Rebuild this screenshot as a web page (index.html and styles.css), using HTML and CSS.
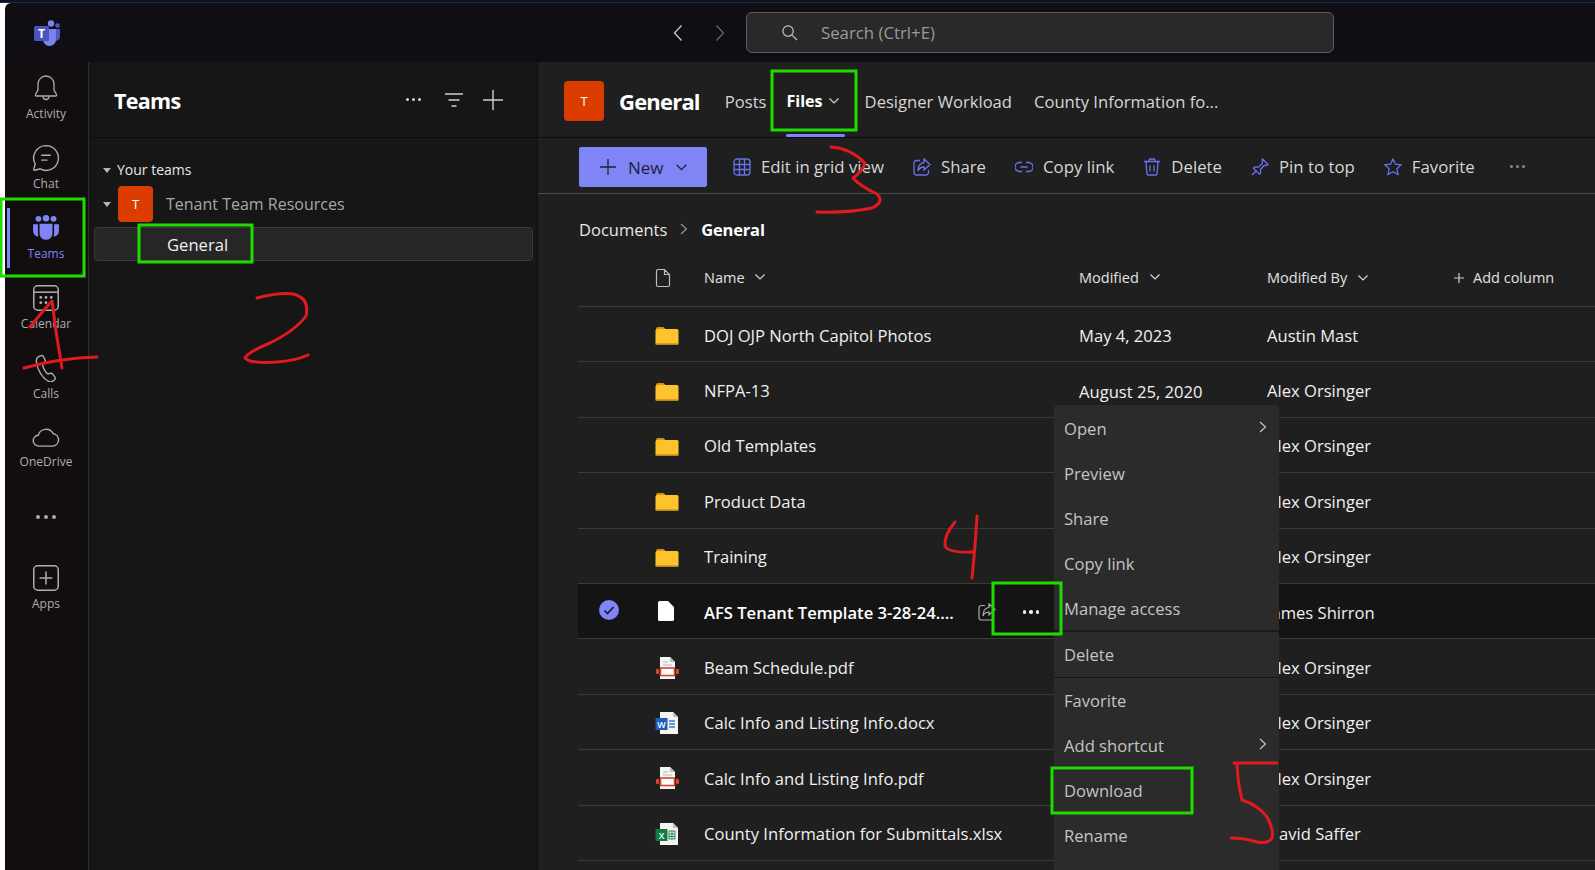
FILE: index.html
```html
<!DOCTYPE html>
<html lang="en">
<head>
    <meta charset="UTF-8">
    <title>General - Files</title>
    <link rel="stylesheet" href="styles.css">
</head>
<body>
    <svg class="defs" width="0" height="0">
        <symbol id="folder" viewBox="0 0 24 20">
            <path d="M1 4a2 2 0 0 1 2-2h5.500l2.500 2.500H1z" fill="#d9930d"/>
            <rect x="0.500" y="4" width="23" height="15.500" rx="1.500" fill="#fcc32d"/>
            <rect x="0.500" y="18" width="23" height="1.500" fill="#d9a017"/>
        </symbol>
        <symbol id="pdf" viewBox="0 0 24 24">
            <path d="M5 1h10l5 5v17H5z" fill="#f4f4f4"/>
            <path d="M15 1l5 5h-5z" fill="#bdbdbd"/>
            <path d="M8 6h5M8 9h9" stroke="#bbb" fill="none"/>
            <rect x="1" y="13" width="3" height="5" rx="1" fill="#d8482b"/>
            <rect x="21" y="13" width="3" height="5" rx="1" fill="#d8482b"/>
            <rect x="5.500" y="12" width="14" height="7.500" fill="#fff" stroke="#d8482b" stroke-width="1.600"/>
        </symbol>
        <symbol id="chevron" viewBox="0 0 12 8">
            <path d="M1.500 1.500L6 6l4.500-4.500" fill="none" stroke="currentColor" stroke-width="1.200"/>
        </symbol>
    </svg>

    <div class="top-strip"></div>
    <div class="app">
        <header class="titlebar">
            <svg class="logo" viewBox="0 0 27 26">
                <circle cx="17" cy="3.500" r="3.200" fill="#7b83eb"/>
                <circle cx="23.500" cy="5.500" r="2.300" fill="#5059c9"/>
                <path d="M19 9h7v8a4 4 0 0 1-7 2.500z" fill="#5059c9"/>
                <path d="M8 9h14v10a6.500 6.500 0 0 1-13 1z" fill="#7b83eb"/>
                <rect x="0" y="6" width="15" height="15" rx="1.500" fill="#4b53bc"/>
                <text class="logo-t" x="7.500" y="18">T</text>
            </svg>
            <div class="history">
                <svg class="hist-arrow" viewBox="0 0 10 18"><path d="M8.500 1.500L1.500 9l7 7.500"/></svg>
                <svg class="hist-arrow dim" viewBox="0 0 10 18"><path d="M1.500 1.500L8.500 9l-7 7.500"/></svg>
            </div>
            <div class="search">
                <svg class="search-icon" viewBox="0 0 18 18"><circle cx="7.500" cy="7.500" r="5.500"/><path d="M11.500 11.500L17 17"/></svg>
                <span>Search (Ctrl+E)</span>
            </div>
        </header>

        <div class="main">
            <nav class="rail">
                <div class="rail-item">
                    <svg class="rail-icon" viewBox="0 0 24 28"><path d="M12 2a8 8 0 0 0-8 8v6l-2.500 4.500a1 1 0 0 0 1 1.500h19a1 1 0 0 0 1-1.500L20 16v-6a8 8 0 0 0-8-8z"/><path d="M9 22.500a3 3 0 0 0 6 0"/></svg>
                    <span>Activity</span>
                </div>
                <div class="rail-item">
                    <svg class="rail-icon" viewBox="0 0 26 26"><path d="M13 1.500a11.500 11.500 0 1 1-5.500 21.600l-4.500 1.300a1 1 0 0 1-1.300-1.300l1.300-4.500A11.500 11.500 0 0 1 13 1.500z"/><path d="M8.500 10.500h9M8.500 15h6"/></svg>
                    <span>Chat</span>
                </div>
                <div class="rail-item active">
                    <svg class="rail-icon" viewBox="0 0 26 24">
                        <g class="solid">
                            <circle cx="6" cy="3.500" r="2.700"/><circle cx="13" cy="3" r="3"/><circle cx="20" cy="3.500" r="2.700"/>
                            <path d="M1 8.500h4.500v8.500q0 1.500.6 3A5 5 0 0 1 1 15z"/>
                            <path d="M25 8.500h-4.500v8.500q0 1.500-.6 3a5 5 0 0 0 5.100-5z"/>
                            <path d="M7 8h12v9a6 6 0 0 1-12 0z"/>
                        </g>
                    </svg>
                    <span>Teams</span>
                </div>
                <div class="rail-item">
                    <svg class="rail-icon" viewBox="0 0 24 24">
                        <rect x="1.500" y="1.500" width="21" height="21" rx="3.500"/><path d="M1.500 7h21"/>
                        <g class="solid"><circle cx="7.500" cy="11.500" r="1.200"/><circle cx="12" cy="11.500" r="1.200"/><circle cx="16.500" cy="11.500" r="1.200"/><circle cx="7.500" cy="16" r="1.200"/><circle cx="12" cy="16" r="1.200"/></g>
                    </svg>
                    <span>Calendar</span>
                </div>
                <div class="rail-item">
                    <svg class="rail-icon" viewBox="0 0 24 26"><path d="M5 2.500l2.500-1c1-.4 1.800 0 2.300 1l1.400 3.300c.3.900.1 1.700-.6 2.300L8.800 9.600c.5 3 2.500 7 5 9l2.300-.7c.9-.2 1.600 0 2.200.8l2 2.800c.6.900.5 1.700-.3 2.400l-1.800 1.300c-1 .7-2.300.9-3.400.4C9 23 4 15.500 3 7c-.2-1.900.6-3.600 2-4.500z"/></svg>
                    <span>Calls</span>
                </div>
                <div class="rail-item short">
                    <svg class="rail-icon" viewBox="0 0 26 18"><path d="M6.500 16.500a5 5 0 0 1-.7-10A7.500 7.500 0 0 1 19.700 5a5.800 5.800 0 0 1-.2 11.500z"/></svg>
                    <span>OneDrive</span>
                </div>
                <div class="rail-more"><i></i><i></i><i></i></div>
                <div class="rail-item">
                    <svg class="rail-icon" viewBox="0 0 24 24"><rect x="1.500" y="1.500" width="21" height="21" rx="3.500"/><path d="M12 6.500v11M6.500 12h11"/></svg>
                    <span>Apps</span>
                </div>
            </nav>

            <aside class="sidebar">
                <div class="side-head">
                    <h1>Teams</h1>
                    <div class="side-actions">
                        <div class="dots"><i></i><i></i><i></i></div>
                        <svg class="side-icon filter" viewBox="0 0 18 14"><path d="M0 1h18M3.500 7h11M6.500 13h5"/></svg>
                        <svg class="side-icon plus" viewBox="0 0 20 20"><path d="M10 0v20M0 10h20"/></svg>
                    </div>
                </div>
                <div class="tree">
                    <div class="tree-label"><span class="caret"></span>Your teams</div>
                    <div class="tree-team">
                        <span class="caret"></span>
                        <span class="avatar small">T</span>
                        <span class="team-name">Tenant Team Resources</span>
                    </div>
                    <div class="tree-channel">General</div>
                </div>
            </aside>

            <main class="content">
                <div class="tabs">
                    <span class="avatar">T</span>
                    <h2>General</h2>
                    <span class="tab">Posts</span>
                    <span class="tab current">Files <svg class="chev" viewBox="0 0 12 8"><use href="#chevron"/></svg></span>
                    <span class="tab">Designer Workload</span>
                    <span class="tab">County Information fo...</span>
                </div>

                <div class="toolbar">
                    <button class="new-btn">
                        <svg class="new-plus" viewBox="0 0 16 16"><path d="M8 0v16M0 8h16"/></svg>
                        New
                        <svg class="chev big" viewBox="0 0 12 8"><use href="#chevron"/></svg>
                    </button>
                    <span class="tool first">
                        <svg class="tool-icon" viewBox="0 0 18 18"><rect x="1" y="1" width="16" height="16" rx="3"/><path d="M1 6.500h16M1 11.500h16M6.500 1v16M11.500 1v16"/></svg>
                        Edit in grid view
                    </span>
                    <span class="tool">
                        <svg class="tool-icon" viewBox="0 0 18 18"><path d="M7 2.500H3.500a2.500 2.500 0 0 0-2.500 2.500v9.500A2.500 2.500 0 0 0 3.500 17H13a2.500 2.500 0 0 0 2.500-2.500V12"/><path d="M11 1l6 5.500-6 5.500V9C8 9 6 10.500 5 13c0-4.500 2-8 6-8.500z"/></svg>
                        Share
                    </span>
                    <span class="tool">
                        <svg class="tool-icon" viewBox="0 0 18 18"><path d="M7 4.500H4.500a4.500 4.500 0 0 0 0 9H7M11 4.500h2.500a4.500 4.500 0 0 1 0 9H11M5.500 9h7"/></svg>
                        Copy link
                    </span>
                    <span class="tool">
                        <svg class="tool-icon" viewBox="0 0 18 18"><path d="M1 3.500h16M6 3.500V2.500a1.500 1.500 0 0 1 1.500-1.500h3A1.500 1.500 0 0 1 12 2.500v1M3 3.500l.8 11.500a2 2 0 0 0 2 2h6.400a2 2 0 0 0 2-2L15 3.500M7 7.500v6M11 7.500v6"/></svg>
                        Delete
                    </span>
                    <span class="tool">
                        <svg class="tool-icon" viewBox="0 0 18 18"><path d="M11.500 1L17 6.500l-1.200.8-2.800.2-3.500 4 .2 3.500-1.200 1.200-6-6 1.200-1.200 3.500.2 4-3.500.2-2.800zM5.500 12.500L1 17"/></svg>
                        Pin to top
                    </span>
                    <span class="tool">
                        <svg class="tool-icon" viewBox="0 0 18 18"><path d="M9 1l2.400 5.200 5.600.7-4.100 3.900 1.100 5.700L9 13.700l-5 2.800 1.100-5.700L1 6.900l5.600-.7z"/></svg>
                        Favorite
                    </span>
                    <div class="dots tool-more"><i></i><i></i><i></i></div>
                </div>

                <div class="crumbs">
                    <span>Documents</span>
                    <svg class="crumb-sep" viewBox="0 0 8 12"><path d="M1 1l5.500 5L1 11"/></svg>
                    <strong>General</strong>
                </div>

                <div class="list">
                    <div class="row head">
                        <span></span>
                        <svg class="head-file" viewBox="0 0 16 20"><path d="M1.500 3a1.500 1.500 0 0 1 1.500-1.500h6.500l5 5V17a1.500 1.500 0 0 1-1.500 1.500H3A1.500 1.500 0 0 1 1.500 17zM9.500 1.500v5h5"/></svg>
                        <span>Name <svg class="chev" viewBox="0 0 12 8"><use href="#chevron"/></svg></span>
                        <span>Modified <svg class="chev" viewBox="0 0 12 8"><use href="#chevron"/></svg></span>
                        <span class="head-by">Modified By <svg class="chev" viewBox="0 0 12 8"><use href="#chevron"/></svg><span class="add-col"><svg class="add-plus" viewBox="0 0 12 12"><path d="M6 1v10M1 6h10"/></svg>Add column</span></span>
                    </div>

                    <div class="row"><span></span><svg class="file-icon" viewBox="0 0 24 20"><use href="#folder"/></svg><span>DOJ OJP North Capitol Photos</span><span class="row-date">May 4, 2023</span><span>Austin Mast</span></div>
                    <div class="row"><span></span><svg class="file-icon" viewBox="0 0 24 20"><use href="#folder"/></svg><span>NFPA-13</span><span class="row-date">August 25, 2020</span><span>Alex Orsinger</span></div>
                    <div class="row"><span></span><svg class="file-icon" viewBox="0 0 24 20"><use href="#folder"/></svg><span>Old Templates</span><span></span><span>Alex Orsinger</span></div>
                    <div class="row"><span></span><svg class="file-icon" viewBox="0 0 24 20"><use href="#folder"/></svg><span>Product Data</span><span></span><span>Alex Orsinger</span></div>
                    <div class="row"><span></span><svg class="file-icon" viewBox="0 0 24 20"><use href="#folder"/></svg><span>Training</span><span></span><span>Alex Orsinger</span></div>
                    <div class="row selected">
                        <span class="check"><svg viewBox="0 0 20 20"><circle cx="10" cy="10" r="10" fill="#7f85f5"/><path d="M5.500 10.500l3 3 6-6.500" fill="none" stroke="#1a1a1a" stroke-width="1.600"/></svg></span>
                        <svg class="doc-blank" viewBox="0 0 16 20"><path d="M0 1.500A1.500 1.500 0 0 1 1.500 0H10l6 6v12.500a1.500 1.500 0 0 1-1.500 1.500h-13A1.500 1.500 0 0 1 0 18.500z" fill="#fff"/></svg>
                        <span class="selected-name">
                            <b>AFS Tenant Template 3-28-24....</b>
                            <svg class="row-share" viewBox="0 0 18 18"><path d="M7 2.500H3.500a2.500 2.500 0 0 0-2.500 2.500v9.500A2.500 2.500 0 0 0 3.500 17H13a2.500 2.500 0 0 0 2.500-2.500V12"/><path d="M11 1l6 5.500-6 5.500V9C8 9 6 10.500 5 13c0-4.500 2-8 6-8.500z"/></svg>
                            <span class="dots bright"><i></i><i></i><i></i></span>
                        </span>
                        <span></span>
                        <span>James Shirron</span>
                    </div>
                    <div class="row"><span></span><svg class="file-icon doc" viewBox="0 0 24 24"><use href="#pdf"/></svg><span>Beam Schedule.pdf</span><span></span><span>Alex Orsinger</span></div>
                    <div class="row"><span></span>
                        <svg class="file-icon doc" viewBox="0 0 24 24">
                            <path d="M5 1h13l5 5v17H5z" fill="#f4f4f4"/>
                            <path d="M18 1l5 5h-5z" fill="#bdbdbd"/>
                            <path d="M14 10h6M14 13h6M14 16h6" stroke="#3b78c4" stroke-width="1.300"/>
                            <rect x="0.500" y="7" width="12" height="12" fill="#1b5ebe"/>
                            <text class="badge-letter" x="6.500" y="16.500">W</text>
                        </svg>
                        <span>Calc Info and Listing Info.docx</span><span></span><span>Alex Orsinger</span></div>
                    <div class="row"><span></span><svg class="file-icon doc" viewBox="0 0 24 24"><use href="#pdf"/></svg><span>Calc Info and Listing Info.pdf</span><span></span><span>Alex Orsinger</span></div>
                    <div class="row"><span></span>
                        <svg class="file-icon doc" viewBox="0 0 24 24">
                            <path d="M5 1h13l5 5v17H5z" fill="#f4f4f4"/>
                            <path d="M18 1l5 5h-5z" fill="#bdbdbd"/>
                            <path d="M14 9h6v8h-6zM14 12h6M14 14.500h6M17 9v8" stroke="#1f8a55" stroke-width="1" fill="none"/>
                            <rect x="0.500" y="7" width="12" height="12" fill="#107c41"/>
                            <text class="badge-letter" x="6.500" y="16.500">X</text>
                        </svg>
                        <span>County Information for Submittals.xlsx</span><span></span><span>David Saffer</span></div>
                </div>
            </main>
        </div>
    </div>

    <!-- context menu on the selected file -->
    <div class="menu">
        <div class="menu-group first">
            <div class="menu-item">Open <svg class="menu-arrow" viewBox="0 0 8 12"><path d="M1 1l5.500 5L1 11"/></svg></div>
            <div class="menu-item">Preview</div>
            <div class="menu-item">Share</div>
            <div class="menu-item">Copy link</div>
            <div class="menu-item">Manage access</div>
        </div>
        <div class="menu-group second">
            <div class="menu-item">Delete</div>
        </div>
        <div class="menu-group third">
            <div class="menu-item">Favorite</div>
            <div class="menu-item">Add shortcut <svg class="menu-arrow" viewBox="0 0 8 12"><path d="M1 1l5.500 5L1 11"/></svg></div>
            <div class="menu-item">Download</div>
            <div class="menu-item">Rename</div>
        </div>
    </div>

    <!-- hand drawn marks on top of the screenshot -->
    <svg class="marks" viewBox="0 0 1595 870">
        <g class="green">
            <rect x="1" y="199" width="83" height="77"/>
            <rect x="139" y="225" width="113" height="37"/>
            <rect x="772" y="71" width="84" height="59"/>
            <rect x="993" y="583" width="68" height="51"/>
            <rect x="1052" y="768" width="140" height="45"/>
        </g>
        <g class="red">
            <path d="M30 327Q42 312 52 301Q56 335 62 368"/>
            <path d="M24 368Q60 358 97 357"/>
            <path d="M257 298Q280 292 293 294Q310 298 306 316Q296 330 270 343Q248 352 245 358Q250 364 277 362Q295 361 308 355"/>
            <path d="M831 147Q850 148 865 163Q862 172 853 178Q860 186 877 194Q885 202 872 208Q850 213 817 212"/>
            <path d="M955 522Q944 535 945 546Q948 553 973 552"/>
            <path d="M977 516Q975 550 972 578"/>
            <path d="M1234 763L1277 763"/>
            <path d="M1237 764Q1238 785 1242 800Q1258 805 1267 817Q1274 830 1272 838Q1268 844 1257 842Q1245 838 1231 838"/>
        </g>
    </svg>
</body>
</html>
```

FILE: styles.css
```css
* {
    box-sizing: border-box;
}
body {
    margin: 0;
    background: #fff;
    font-family: "Open Sans", "Noto Sans", sans-serif;
    color: #f0f0f0;
    height: 870px;
    overflow: hidden;
    position: relative;
}
.defs {
    position: absolute;
}
.top-strip {
    height: 3px;
    background: #0b1322;
    border-bottom: 1px solid #1b2b44;
}
.badge-letter {
    font-family: "Open Sans", sans-serif;
    font-size: 9px;
    font-weight: 600;
    fill: #fff;
    text-anchor: middle;
}
.app {
    margin-left: 5px;
    height: 867px;
    background: #100e12;
    border-top-left-radius: 6px;
    display: flex;
    flex-direction: column;
}

/* title bar */
.titlebar {
    height: 59px;
    display: flex;
    align-items: center;
    flex-shrink: 0;
}
.logo {
    width: 27px;
    height: 26px;
    margin-left: 29px;
}
.logo-t {
    font-family: "Open Sans", sans-serif;
    font-size: 12px;
    font-weight: 700;
    fill: #fff;
    text-anchor: middle;
}
.history {
    display: flex;
    gap: 32px;
    margin-left: 612px;
}
.hist-arrow {
    width: 10px;
    height: 18px;
    fill: none;
    stroke: #c8c8c8;
    stroke-width: 1.3;
}
.hist-arrow.dim {
    stroke: #6a6a6a;
}
.search {
    width: 588px;
    height: 41px;
    margin-left: 21px;
    background: #292929;
    border: 1px solid #5c5c5c;
    border-radius: 6px;
    display: flex;
    align-items: center;
    padding-left: 34px;
    font-size: 16.800px;
    color: #9a9a9a;
}
.search-icon {
    width: 17px;
    height: 17px;
    margin-right: 23px;
    fill: none;
    stroke: #c0c0c0;
    stroke-width: 1.3;
}

.main {
    flex: 1;
    display: flex;
    min-height: 0;
}

/* left rail */
.rail {
    width: 84px;
    flex-shrink: 0;
    background: #120e10;
    border-right: 1px solid #2c2c2c;
    padding: 4px 1px 0 0;
    display: flex;
    flex-direction: column;
}
.rail-item {
    height: 70px;
    padding-top: 8px;
    display: flex;
    flex-direction: column;
    align-items: center;
    font-size: 12px;
    line-height: 16px;
    color: #adadad;
    position: relative;
}
.rail-item span {
    margin-top: 4px;
}
.rail-item.short span {
    margin-top: 2px;
}
.rail-icon {
    width: 28px;
    height: 28px;
    fill: none;
    stroke: #adadad;
    stroke-width: 1.3;
}
.rail-icon .solid {
    fill: #adadad;
    stroke: none;
}
.rail-item.active {
    color: #7f85f5;
}
.rail-item.active .solid {
    fill: #7f85f5;
}
.rail-item.active::before {
    content: "";
    position: absolute;
    left: 2px;
    top: 2px;
    width: 3px;
    height: 60px;
    background: #7f85f5;
}
.rail-more {
    height: 62px;
    display: flex;
    align-items: center;
    justify-content: center;
    gap: 4px;
    margin-bottom: 8px;
}
.rail-more i,
.dots i {
    display: block;
    width: 4px;
    height: 4px;
    border-radius: 50%;
    background: #adadad;
}
.dots {
    display: flex;
    gap: 3px;
}

/* teams list */
.sidebar {
    width: 449px;
    flex-shrink: 0;
    background: #161616;
    border-right: 1px solid #101010;
}
.side-head {
    height: 76px;
    border-bottom: 1px solid #0c0c0c;
    display: flex;
    align-items: center;
    padding-left: 25px;
}
.side-head h1 {
    margin: 2px 0 0;
    font-size: 21.500px;
    font-weight: 700;
    letter-spacing: -0.7px;
    color: #fff;
}
.side-actions {
    margin-left: auto;
    margin-right: 34px;
    display: flex;
    align-items: center;
    gap: 22px;
}
.side-actions .dots i {
    background: #d6d6d6;
    width: 3px;
    height: 3px;
}
.side-icon {
    width: 18px;
    height: 14px;
    fill: none;
    stroke: #d0d0d0;
    stroke-width: 1.4;
}
.side-icon.filter {
    margin: 0 -2px 0 2px;
}
.side-icon.plus {
    width: 20px;
    height: 20px;
}
.tree {
    padding: 21px 4px 0 5px;
}
.tree-label {
    font-size: 14px;
    line-height: 22px;
    color: #e6e6e6;
    display: flex;
    align-items: center;
    padding-left: 9px;
}
.tree-label .caret {
    margin-right: 6px;
}
.caret {
    width: 0;
    height: 0;
    border-left: 4px solid transparent;
    border-right: 4px solid transparent;
    border-top: 5px solid #b5b5b5;
    margin-right: 7px;
    flex-shrink: 0;
}
.tree-team {
    height: 36px;
    margin-top: 5px;
    display: flex;
    align-items: center;
    padding-left: 9px;
}
.avatar {
    width: 40px;
    height: 40px;
    background: #dc3c00;
    border-radius: 4px;
    display: flex;
    align-items: center;
    justify-content: center;
    font-size: 13px;
    color: #fff;
    flex-shrink: 0;
}
.avatar.small {
    width: 35px;
    height: 36px;
}
.team-name {
    margin-left: 13px;
    font-size: 16px;
    color: #a8a8a8;
}
.tree-channel {
    height: 34px;
    margin-top: 5px;
    background: #262626;
    border: 1px solid #3a3a3a;
    border-radius: 4px;
    display: flex;
    align-items: center;
    padding-left: 72px;
    font-size: 16.600px;
    color: #f0f0f0;
}

/* file area */
.content {
    flex: 1;
    min-width: 0;
    background: #1f1f1f;
}
.tabs {
    height: 76px;
    padding: 3px 0 0 26px;
    border-bottom: 1px solid #0c0c0c;
    display: flex;
    align-items: center;
    gap: 22px;
}
.tabs h2 {
    margin: 0 3px 0 -7px;
    font-size: 22px;
    font-weight: 700;
    letter-spacing: -0.8px;
    color: #fff;
}
.tab {
    font-size: 16.600px;
    color: #d6d6d6;
    position: relative;
    white-space: nowrap;
}
.tab.current {
    font-size: 16px;
    font-weight: 700;
    color: #fff;
    margin: 0 3px 0 -2px;
}
.tab.current::after {
    content: "";
    position: absolute;
    left: 0;
    right: -5px;
    bottom: -25px;
    height: 3px;
    border-radius: 2px;
    background: #7f85f5;
}
.chev {
    width: 12px;
    height: 8px;
    margin-left: 6px;
    vertical-align: 2px;
    color: #d6d6d6;
}
.tab.current .chev {
    margin-left: 1px;
}
.toolbar {
    height: 56px;
    padding: 2px 0 0 41px;
    border-bottom: 1px solid #4a4a4a;
    display: flex;
    align-items: center;
    gap: 29px;
}
.new-btn {
    width: 128px;
    height: 40px;
    background: #7f85f5;
    border: none;
    border-radius: 2px;
    color: #20213a;
    font-family: inherit;
    font-size: 17px;
    display: flex;
    align-items: center;
    padding: 1px 0 0 21px;
}
.new-plus {
    width: 16px;
    height: 16px;
    margin-right: 12px;
    fill: none;
    stroke: #20213a;
    stroke-width: 1.3;
}
.chev.big {
    width: 13px;
    height: 9px;
    margin-left: 11px;
    color: #20213a;
}
.tool {
    display: flex;
    align-items: center;
    font-size: 16.800px;
    color: #d6d6d6;
    white-space: nowrap;
}
.tool.first {
    margin-left: -3px;
}
.tool-icon {
    width: 18px;
    height: 18px;
    margin-right: 10px;
    fill: none;
    stroke: #6a72f0;
    stroke-width: 1.3;
}
.tool-more {
    margin-left: 6px;
}
.tool-more i {
    width: 3px;
    height: 3px;
    background: #8a8a8a;
}
.crumbs {
    height: 63px;
    padding: 7px 0 0 41px;
    display: flex;
    align-items: center;
    font-size: 16.500px;
    color: #e6e6e6;
}
.crumbs strong {
    color: #fff;
    letter-spacing: -0.2px;
}
.crumb-sep {
    width: 8px;
    height: 12px;
    margin: 0 13px;
    fill: none;
    stroke: #9a9a9a;
    stroke-width: 1.1;
}
.list {
    margin-left: 40px;
}
.row {
    height: 55.400px;
    display: grid;
    grid-template-columns: 60px 66px 375px 188px 1fr;
    align-items: center;
    border-bottom: 1px solid #3a3a3a;
    font-size: 16.600px;
    padding-top: 2px;
}
.row.head {
    height: 50px;
    padding: 0 0 8px;
    font-size: 14.500px;
    font-weight: 500;
    color: #e2e2e2;
}
.head-by {
    display: flex;
    align-items: center;
    white-space: pre;
}
.head-by .chev {
    vertical-align: 0;
}
.add-col {
    margin-left: 84px;
    display: flex;
    align-items: center;
}
.add-plus {
    width: 12px;
    height: 12px;
    margin-right: 8px;
    fill: none;
    stroke: #d0d0d0;
    stroke-width: 1.2;
}
.head-file {
    width: 16px;
    height: 20px;
    margin-left: 17px;
    fill: none;
    stroke: #bdbdbd;
    stroke-width: 1.2;
}
.file-icon {
    width: 24px;
    height: 22px;
    margin-left: 17px;
}
.file-icon.doc {
    height: 24px;
}
.row-date {
    padding-top: 1px;
}
.row.selected {
    background: #141414;
}
.check {
    width: 20px;
    height: 20px;
    margin-left: 21px;
    margin-bottom: 4px;
}
.doc-blank {
    width: 16px;
    height: 20px;
    margin-left: 20px;
    margin-bottom: 2px;
}
.selected-name {
    display: flex;
    align-items: center;
}
.selected-name b {
    font-weight: 600;
    color: #fff;
}
.row-share {
    width: 18px;
    height: 18px;
    margin-left: 24px;
    fill: none;
    stroke: #adadad;
    stroke-width: 1.2;
}
.dots.bright {
    margin-left: 27px;
}
.dots.bright i {
    width: 3.500px;
    height: 3.500px;
    background: #f0f0f0;
}

/* context menu */
.menu {
    position: absolute;
    left: 1054px;
    top: 405px;
    width: 225px;
    height: 465px;
    background: #2b2b2b;
    border-radius: 4px 4px 0 0;
    padding-top: 1px;
    font-size: 16.600px;
    color: #c4c4c4;
}
.menu-item {
    height: 45px;
    display: flex;
    align-items: center;
    justify-content: space-between;
    padding: 0 10px;
}
.menu-group.first {
    height: 226px;
    border-bottom: 2px solid #1a1a1a;
}
.menu-group.second {
    border-bottom: 1px solid #161616;
}
.menu-arrow {
    width: 8px;
    height: 12px;
    margin-right: 2px;
    margin-bottom: 3px;
    fill: none;
    stroke: #c4c4c4;
    stroke-width: 1.2;
}

/* annotations */
.marks {
    position: absolute;
    left: 0;
    top: 0;
    width: 1595px;
    height: 870px;
    pointer-events: none;
    fill: none;
}
.marks .green {
    stroke: #1fdc00;
    stroke-width: 3;
}
.marks .red {
    stroke: #e01a1f;
    stroke-width: 3;
    stroke-linecap: round;
    stroke-linejoin: round;
}
```
